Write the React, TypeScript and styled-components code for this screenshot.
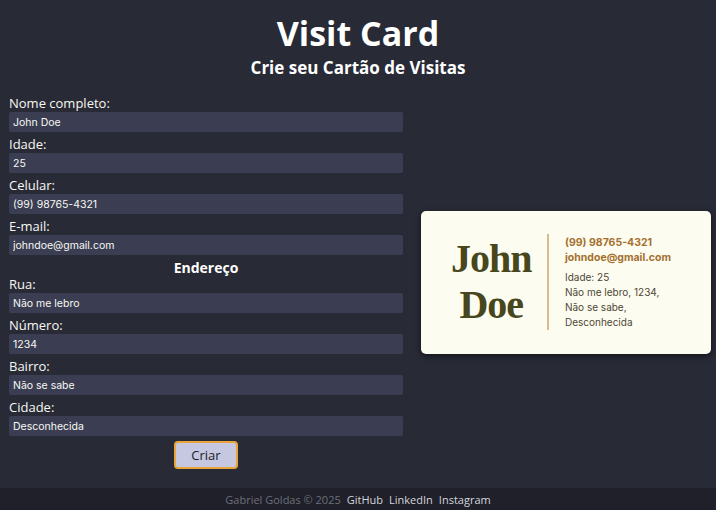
import React from "react";
import styled, { createGlobalStyle } from "styled-components";

const GlobalStyle = createGlobalStyle`
  html, body { margin: 0; padding: 0; }
  body {
    background: #282a36;
    color: #f8f8f2;
    font-family: "Open Sans", "Noto Sans", sans-serif;
  }
  * { box-sizing: border-box; }
`;

const Page = styled.div`
  min-height: 100vh;
  display: flex;
  flex-direction: column;
`;

const Header = styled.header`
  padding-top: 12px;
  text-align: center;
`;

const Title = styled.h1`
  margin: 0;
  font-size: 34px;
  line-height: 42px;
  font-weight: 700;
  color: #ffffff;
`;

const Subtitle = styled.h2`
  margin: 3px 0 0;
  font-size: 17px;
  line-height: 22px;
  font-weight: 700;
  color: #ffffff;
`;

const Main = styled.main`
  display: flex;
  align-items: center;
  gap: 18px;
  padding: 16px 5px 0 9px;
`;

const Form = styled.form`
  width: 394px;
  display: flex;
  flex-direction: column;
`;

const Label = styled.label`
  display: block;
  font-size: 13px;
  line-height: 17px;
  color: #f8f8f2;
`;

const Input = styled.input`
  display: block;
  width: 100%;
  height: 20px;
  margin: 0 0 4px;
  padding: 0 4px;
  border: none;
  border-radius: 2px;
  background: #3b3e53;
  color: #f8f8f2;
  font-family: "Inter", "Open Sans", sans-serif;
  font-size: 10.5px;
  outline: none;
`;

const Section = styled.h3`
  margin: 0;
  text-align: center;
  font-size: 14px;
  line-height: 17px;
  font-weight: 700;
  color: #ffffff;
`;

const Button = styled.button`
  align-self: center;
  width: 64px;
  height: 28px;
  margin-top: 1px;
  background: #c6c7e1;
  border: 2px solid #eaa53a;
  border-radius: 4px;
  color: #1b1c24;
  font-family: "Open Sans", sans-serif;
  font-size: 13px;
  cursor: pointer;
`;

const Card = styled.div`
  width: 290px;
  height: 143px;
  background: #fdfcf0;
  border-radius: 5px;
  box-shadow: 0 2px 6px rgba(0, 0, 0, 0.55);
  display: flex;
  align-items: center;
  justify-content: center;
  padding-right: 10px;
`;

const Name = styled.div`
  font-family: "Liberation Serif", "DejaVu Serif", serif;
  font-weight: 700;
  font-size: 40px;
  line-height: 46px;
  color: #47461c;
  text-align: center;
  letter-spacing: -1px;
`;

const Divider = styled.div`
  width: 1.5px;
  height: 96px;
  background: #d9bb8c;
  margin: 0 16px;
`;

const Info = styled.div`
  display: flex;
  flex-direction: column;
  font-family: "Inter", "Open Sans", sans-serif;
`;

const Strong = styled.div`
  font-size: 10.5px;
  line-height: 15px;
  font-weight: 700;
  color: #a4702f;
`;

const Details = styled.div`
  margin-top: 5px;
  font-size: 10px;
  line-height: 15px;
  color: #4d4735;
`;

const Footer = styled.footer`
  margin-top: auto;
  height: 22px;
  background: #1f2029;
  display: flex;
  align-items: center;
  justify-content: center;
  gap: 6px;
  font-size: 11px;
`;

const Copy = styled.span`
  color: #6d6f7c;
`;

const Link = styled.a`
  color: #d4d5de;
  text-decoration: none;
`;

const fields1 = [
  ["Nome completo:", "John Doe"],
  ["Idade:", "25"],
  ["Celular:", "(99) 98765-4321"],
  ["E-mail:", "johndoe@gmail.com"],
];
const fields2 = [
  ["Rua:", "Não me lebro"],
  ["Número:", "1234"],
  ["Bairro:", "Não se sabe"],
  ["Cidade:", "Desconhecida"],
];

export default function App() {
  return (
    <>
      <GlobalStyle />
      <Page>
        <Header>
          <Title>Visit Card</Title>
          <Subtitle>Crie seu Cartão de Visitas</Subtitle>
        </Header>
        <Main>
          <Form onSubmit={(e) => e.preventDefault()}>
            {fields1.map(([l, v]) => (
              <React.Fragment key={l}>
                <Label>{l}</Label>
                <Input defaultValue={v} />
              </React.Fragment>
            ))}
            <Section>Endereço</Section>
            {fields2.map(([l, v]) => (
              <React.Fragment key={l}>
                <Label>{l}</Label>
                <Input defaultValue={v} />
              </React.Fragment>
            ))}
            <Button type="submit">Criar</Button>
          </Form>
          <Card>
            <Name>
              John
              <br />
              Doe
            </Name>
            <Divider />
            <Info>
              <Strong>(99) 98765-4321</Strong>
              <Strong>johndoe@gmail.com</Strong>
              <Details>
                Idade: 25
                <br />
                Não me lebro, 1234,
                <br />
                Não se sabe,
                <br />
                Desconhecida
              </Details>
            </Info>
          </Card>
        </Main>
        <Footer>
          <Copy>Gabriel Goldas © 2025</Copy>
          <Link href="#">GitHub</Link>
          <Link href="#">LinkedIn</Link>
          <Link href="#">Instagram</Link>
        </Footer>
      </Page>
    </>
  );
}
